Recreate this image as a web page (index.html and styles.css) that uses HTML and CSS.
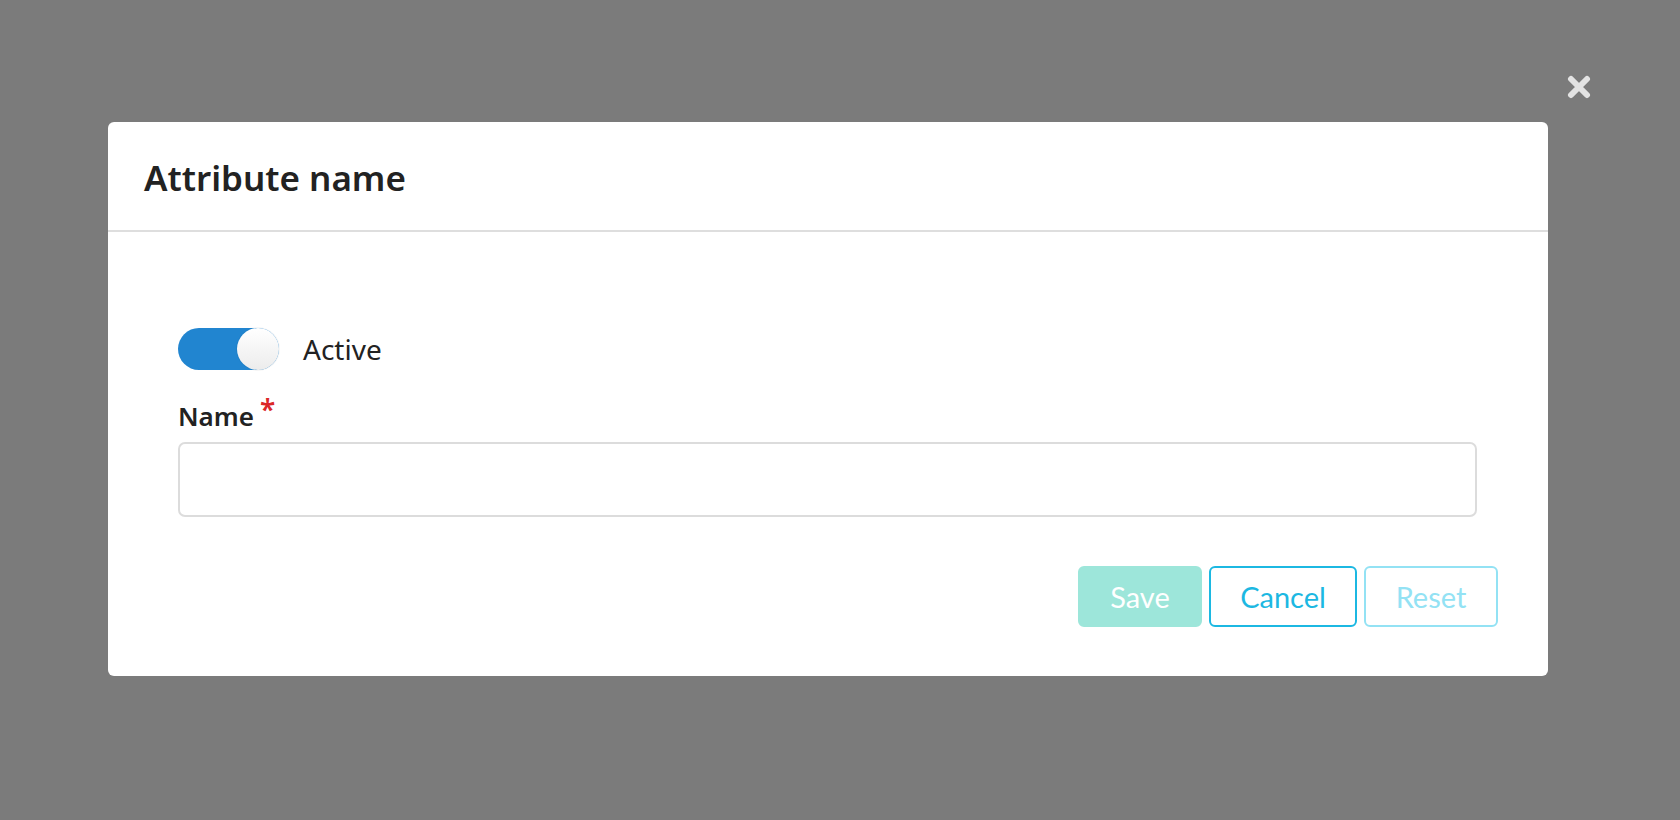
FILE: index.html
```html
<!DOCTYPE html>
<html>
<head>
<meta charset="utf-8">
<link rel="stylesheet" href="styles.css">
</head>
<body>
<div class="overlay">
  <button class="close" aria-label="Close">
    <svg width="24" height="24" viewBox="0 0 24 24"><path d="M4 4 L20 20 M20 4 L4 20" stroke="#e3e3e3" stroke-width="6" stroke-linecap="round"/></svg>
  </button>
  <div class="modal">
    <div class="modal-header">
      <h1 class="title">Attribute name</h1>
    </div>
    <div class="modal-body">
      <div class="form">
        <label class="toggle-row">
          <span class="toggle"><span class="knob"></span></span>
          <span class="toggle-label">Active</span>
        </label>
        <div class="field">
          <div class="field-label">Name<span class="req">*</span></div>
          <input class="input" type="text">
        </div>
      </div>
      <div class="actions">
        <button class="btn btn-save">Save</button>
        <button class="btn btn-cancel">Cancel</button>
        <button class="btn btn-reset">Reset</button>
      </div>
    </div>
  </div>
</div>
</body>
</html>
```
FILE: styles.css
```css
* { box-sizing: border-box; }
html, body { margin: 0; padding: 0; height: 100%; }
body {
  font-family: "Noto Sans", "Open Sans", sans-serif;
  background: #7b7b7b;
  color: #222;
}
.overlay {
  position: relative;
  width: 1680px;
  height: 820px;
  padding: 122px 132px 0 108px;
}
.close {
  position: absolute;
  left: 1567px;
  top: 75px;
  width: 24px;
  height: 24px;
  padding: 0;
  border: 0;
  background: transparent;
  display: flex;
}
.modal {
  width: 1440px;
  height: 554px;
  background: #fff;
  border-radius: 6px;
  display: flex;
  flex-direction: column;
}
.modal-header {
  height: 110px;
  border-bottom: 2px solid #dedede;
  padding: 0 36px;
  display: flex;
  align-items: center;
}
.title {
  margin: 0;
  padding-top: 2px;
  font-size: 35px;
  font-weight: 600;
  color: #222;
}
.modal-body {
  flex: 1;
  display: flex;
  flex-direction: column;
  padding: 96px 50px 49px 70px;
}
.form {
  padding-right: 21px;
  display: flex;
  flex-direction: column;
}
.toggle-row {
  display: flex;
  align-items: center;
  gap: 24px;
  height: 42px;
}
.toggle {
  width: 101px;
  height: 42px;
  border-radius: 21px;
  background: #2185d0;
  position: relative;
}
.knob {
  position: absolute;
  right: 0;
  top: 0;
  width: 42px;
  height: 42px;
  border-radius: 50%;
  background: linear-gradient(to bottom, #ffffff, #ececec);
  box-shadow: 0 0 0 1px rgba(0,0,0,0.04);
}
.toggle-label {
  font-size: 28px;
  color: #222;
}
.field {
  margin-top: 27px;
}
.field-label {
  font-size: 26px;
  font-weight: 600;
  color: #222;
  line-height: 36px;
}
.req {
  color: #db2828;
  margin-left: 6px;
  font-size: 28px;
  position: relative;
  top: -6px;
}
.input {
  display: block;
  margin-top: 8px;
  width: 100%;
  height: 75px;
  border: 2px solid #dcdcdc;
  border-radius: 7px;
  background: #fff;
  outline: none;
}
.actions {
  margin-top: auto;
  display: flex;
  justify-content: flex-end;
  gap: 7px;
}
.btn {
  height: 61px;
  border-radius: 6px;
  font-family: "Lato", "Noto Sans", sans-serif;
  font-size: 29px;
  font-weight: 400;
  background: #fff;
  padding: 0;
  cursor: pointer;
}
.btn-save {
  width: 124px;
  background: #9de6da;
  border: 2px solid #9de6da;
  color: #fff;
}
.btn-cancel {
  width: 148px;
  border: 2px solid #1cb8e2;
  color: #1cb8e2;
}
.btn-reset {
  width: 134px;
  border: 2px solid #93e2f4;
  color: #93e2f4;
}
```
